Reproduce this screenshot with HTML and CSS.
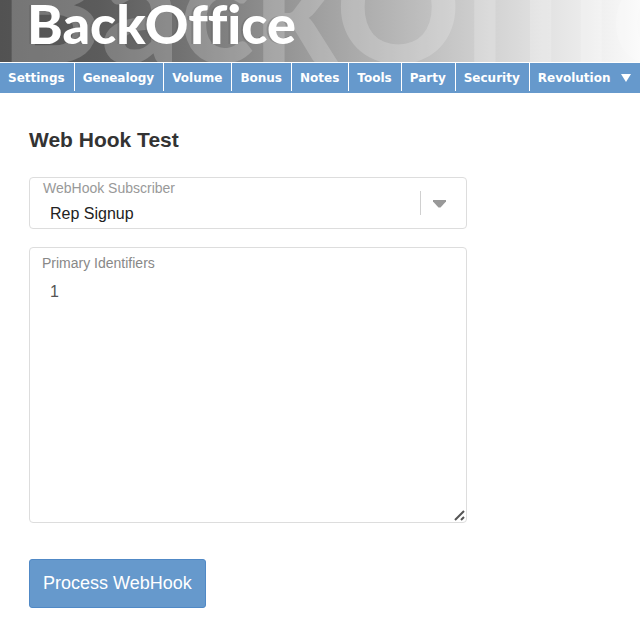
FILE: index.html
```html
<!DOCTYPE html>
<html lang="en">
<head>
  <meta charset="UTF-8">
  <title>Web Hook Test</title>
  <link rel="stylesheet" href="styles.css">
</head>
<body>
  <header class="banner">
    <span class="banner-ghost" aria-hidden="true">BackOffice</span>
    <span class="logo">BackOffice</span>
  </header>
  <nav class="menu">
    <a href="#">Settings</a>
    <a href="#">Genealogy</a>
    <a href="#">Volume</a>
    <a href="#">Bonus</a>
    <a href="#">Notes</a>
    <a href="#">Tools</a>
    <a href="#">Party</a>
    <a href="#">Security</a>
    <a href="#" class="menu-last">Revolution
      <svg width="10" height="8" viewBox="0 0 10 8" aria-hidden="true"><path d="M0 0H10L5 8Z" fill="#fff"/></svg>
    </a>
  </nav>
  <main class="content">
    <h1>Web Hook Test</h1>
    <form class="hook-form">
      <div class="field">
        <label for="subscriber">WebHook Subscriber</label>
        <select id="subscriber">
          <option>Rep Signup</option>
        </select>
        <svg class="field-arrow" width="26" height="24" viewBox="0 0 26 24" aria-hidden="true">
          <path d="M0 0H1V24H0Z" fill="#d0d0d0"/>
          <path d="M13 9H26V10.500L20.500 16.500H18.500L13 10.500Z" fill="#999"/>
        </svg>
      </div>
      <div class="field">
        <label for="identifiers" class="label-area">Primary Identifiers</label>
        <textarea id="identifiers">1</textarea>
      </div>
      <button type="button" class="btn">Process WebHook</button>
    </form>
  </main>
</body>
</html>
```
FILE: styles.css
```css
* {
  box-sizing: border-box;
}
body {
  margin: 0;
  background: #fff;
  font-family: Arial, "Liberation Sans", sans-serif;
  color: #333;
}

/* header */
.banner {
  position: relative;
  height: 62px;
  padding-left: 27px;
  overflow: hidden;
  background: linear-gradient(to right, #525252 0%, #5c5c5c 16%, #757575 30%, #a0a0a0 50%, #c0c0c0 67%, #dedede 83%, #fafafa 100%);
  font-family: "Century Gothic", Lato, sans-serif;
  font-weight: 900;
  font-variant-ligatures: none;
  white-space: nowrap;
}
.banner-ghost {
  position: absolute;
  left: 0;
  top: -84px;
  font-size: 154px;
  line-height: 176px;
  color: rgba(255, 255, 255, 0.2);
}
.logo {
  position: relative;
  display: block;
  font-size: 54px;
  line-height: 48px;
  color: #fff;
  text-shadow: -2px 0 0 rgba(90, 90, 90, 0.3);
}

/* menu bar */
.menu {
  display: flex;
  height: 30px;
  margin-top: 1px;
  padding-bottom: 2px;
  background: #6699cc;
  font: bold 12px Verdana, "DejaVu Sans", sans-serif;
  line-height: 28px;
  white-space: nowrap;
}
.menu a {
  padding: 1px 9px 0 8px;
  border-right: 1px solid #fff;
  color: #fff;
  text-decoration: none;
}
.menu .menu-last {
  display: flex;
  align-items: center;
  gap: 10px;
  border-right: 0;
}

/* form */
.content {
  padding: 34px 29px;
}
h1 {
  margin: 0 0 25px;
  font-size: 21px;
  line-height: 25px;
}
.hook-form {
  max-width: 438px;
}
.field {
  position: relative;
  margin-bottom: 18px;
}
.field label {
  position: absolute;
  left: 14px;
  top: 3px;
  font-size: 14px;
  line-height: 16px;
  color: #999;
}
.field .label-area {
  left: 13px;
  top: 8px;
  color: #888;
}
.field select,
.field textarea {
  display: block;
  width: 100%;
  border: 1px solid #ddd;
  border-radius: 4px;
  background: #fff;
  font-family: inherit;
  font-size: 16px;
}
.field select {
  height: 52px;
  padding: 20px 60px 0 20px;
  appearance: none;
  color: #222;
}
.field textarea {
  height: 276px;
  padding: 34px 20px 10px;
  line-height: 20px;
  color: #555;
  resize: both;
}
.field textarea::-webkit-resizer {
  background: url("data:image/svg+xml,%3Csvg xmlns='http://www.w3.org/2000/svg' width='15' height='15'%3E%3Cpath d='M4 13L13 4M10 13L13 10' stroke='%23555' stroke-width='2'/%3E%3C/svg%3E") no-repeat right bottom;
}
.field-arrow {
  position: absolute;
  right: 21px;
  top: 14px;
  pointer-events: none;
}
.btn {
  height: 49px;
  margin-top: 18px;
  padding: 0 13px;
  border: 1px solid #5089c6;
  border-radius: 3px;
  background: #6699cc;
  color: #fff;
  font-family: inherit;
  font-size: 18px;
  cursor: pointer;
}
```
